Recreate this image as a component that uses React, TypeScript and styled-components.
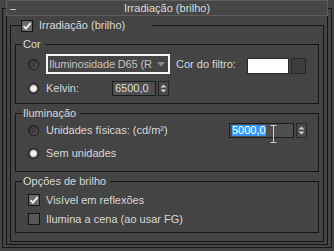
import styled, { createGlobalStyle } from "styled-components"

const GlobalStyle = createGlobalStyle`
    html, body {
        margin: 0;
        background: #444444;
    }
    body {
        font-family: "Liberation Sans", Arial, sans-serif;
        font-size: 11px;
        color: #d8d8d8;
    }
`

function CheckMark() {
    return (
        <svg width="10" height="10" viewBox="0 0 10 10">
            <path
                d="M1.6 5.2 L4 7.6 L8.6 2.2"
                fill="none"
                stroke="#f2f2f2"
                strokeWidth="1.9"
            />
        </svg>
    )
}

function Checkbox({ checked }: { checked?: boolean }) {
    return <Box $checked={checked}>{checked && <CheckMark />}</Box>
}

function Spinner({
    width,
    value,
    selected,
}: {
    width: number
    value: string
    selected?: boolean
}) {
    return (
        <SpinWrap>
            <SpinField $w={width}>
                {selected ? <Selection>{value}</Selection> : value}
            </SpinField>
            <SpinButtons>
                <svg width="7" height="4" viewBox="0 0 7 4">
                    <path d="M0.5 3.5 L3.5 0.5 L6.5 3.5 Z" fill="#cfcfcf" />
                </svg>
                <svg width="7" height="4" viewBox="0 0 7 4">
                    <path d="M0.5 0.5 L3.5 3.5 L6.5 0.5 Z" fill="#cfcfcf" />
                </svg>
            </SpinButtons>
            {selected && (
                <Cursor width="7" height="18" viewBox="0 0 7 18">
                    <path
                        d="M0.5 0.5 H6.5 M3.5 0.5 V17.5 M0.5 17.5 H6.5"
                        fill="none"
                        stroke="#cfcfcf"
                        strokeWidth="1"
                    />
                </Cursor>
            )}
        </SpinWrap>
    )
}

function App() {
    return (
        <>
            <GlobalStyle />
            <Rollout>
                <TitleBar>
                    <TitleInner>
                        <Collapse>–</Collapse>
                        <TitleText>Irradiação (brilho)</TitleText>
                        <span />
                    </TitleInner>
                </TitleBar>
                <Body>
                    <Group>
                        <GroupLegend>
                            <Checkbox checked />
                            <span>Irradiação (brilho)</span>
                        </GroupLegend>

                        <SubGroup $first $pt={3} $pb={7} $gap={7}>
                            <Caption>Cor</Caption>
                            <Row $h={20}>
                                <Radio />
                                <Select>
                                    <SelectText>Iluminosidade D65 (R</SelectText>
                                    <svg width="8" height="5" viewBox="0 0 8 5">
                                        <path d="M0 0 H8 L4 4.5 Z" fill="#8c8c8c" />
                                    </svg>
                                </Select>
                                <Label $w={71} $gap={6}>Cor do filtro:</Label>
                                <Swatch />
                                <SwatchButton />
                            </Row>
                            <Row $h={15}>
                                <Radio $on />
                                <Label $w={66}>Kelvin:</Label>
                                <Spinner width={44} value="6500,0" />
                            </Row>
                        </SubGroup>

                        <SubGroup $pt={3} $pb={10} $gap={8}>
                            <Caption>Iluminação</Caption>
                            <Row $h={15}>
                                <Radio />
                                <Label $w={183}>Unidades físicas: (cd/m²)</Label>
                                <Spinner width={65} value="5000,0" selected />
                            </Row>
                            <Row $h={15}>
                                <Radio $on />
                                <Label>Sem unidades</Label>
                            </Row>
                        </SubGroup>

                        <SubGroup $pt={5} $pb={6} $gap={5}>
                            <Caption>Opções de brilho</Caption>
                            <Row $h={14}>
                                <Checkbox checked />
                                <Label $gap={6}>Visível em reflexões</Label>
                            </Row>
                            <Row $h={14}>
                                <Checkbox />
                                <Label $gap={6}>Ilumina a cena (ao usar FG)</Label>
                            </Row>
                        </SubGroup>
                    </Group>
                </Body>
            </Rollout>
        </>
    )
}

export default App

const Rollout = styled.fieldset`
    margin: 0 2px;
    padding: 0 3px 2px;
    min-width: 0;
    border: 1px solid #161616;
`

const TitleBar = styled.legend`
    box-sizing: border-box;
    width: 100%;
    height: 16px;
    margin: 0;
    padding: 0;
    border: 1px solid #5d5d5d;
    background: #474747;
`

const TitleInner = styled.div`
    display: grid;
    grid-template-columns: 20px 1fr 20px;
    align-items: center;
    height: 14px;
    line-height: 14px;
    color: #dcdcdc;
`

const Collapse = styled.span`
    padding-left: 3px;
`

const TitleText = styled.span`
    text-align: center;
`

const Body = styled.div`
    border: 1px solid #161616;
    border-top: none;
    padding: 3px 3px 2px;
`

const Group = styled.fieldset`
    margin: 0;
    padding: 0 4px 8px;
    min-width: 0;
    border: 1px solid #161616;
`

const GroupLegend = styled.legend`
    box-sizing: border-box;
    width: 131px;
    height: 13px;
    margin-left: 6px;
    padding: 0;
    display: flex;
    align-items: center;
    gap: 6px;
    line-height: 13px;
`

const SubGroup = styled.fieldset<{
    $first?: boolean
    $pt: number
    $pb: number
    $gap: number
}>`
    margin: ${({ $first }) => ($first ? "6px" : "3px")} 0 0;
    padding: ${({ $pt }) => $pt}px 0 ${({ $pb }) => $pb}px;
    min-width: 0;
    border: 1px solid #161616;
    display: flex;
    flex-direction: column;
    gap: ${({ $gap }) => $gap}px;
`

const Caption = styled.legend`
    margin-left: 6px;
    padding: 0 4px 0 1px;
    height: 13px;
    line-height: 13px;
`

const Row = styled.div<{ $h: number }>`
    display: flex;
    align-items: center;
    height: ${({ $h }) => $h}px;
    padding-left: 12px;
`

const Label = styled.span<{ $w?: number; $gap?: number }>`
    flex: none;
    margin-left: ${({ $gap }) => $gap ?? 7}px;
    width: ${({ $w }) => ($w ? `${$w}px` : "auto")};
    white-space: nowrap;
    line-height: 13px;
`

const Box = styled.span<{ $checked?: boolean }>`
    box-sizing: border-box;
    flex: none;
    width: 12px;
    height: 12px;
    border: 1px solid #151515;
    background: ${({ $checked }) => ($checked ? "#6a6a6a" : "#575757")};
    display: flex;
    align-items: center;
    justify-content: center;
`

const Radio = styled.span<{ $on?: boolean }>`
    box-sizing: border-box;
    flex: none;
    width: 11px;
    height: 11px;
    border-radius: 50%;
    border: 1px solid #141414;
    background: ${({ $on }) =>
        $on
            ? "radial-gradient(circle, #f2f2f2 0 2.6px, #9a9a9a 3.4px, #555555 4.5px)"
            : "#3e3e3e"};
    box-shadow: ${({ $on }) =>
        $on ? "none" : "inset -1px -1px 0 #5c5c5c"};
`

const Select = styled.div`
    box-sizing: border-box;
    flex: none;
    width: 124px;
    height: 20px;
    margin-left: 7px;
    padding: 0 3px 0 1px;
    border: 2px solid #f4f4f4;
    background: #454545;
    display: flex;
    align-items: center;
    justify-content: space-between;
    color: #c2c2c2;
`

const SelectText = styled.span`
    flex: none;
    white-space: nowrap;
    line-height: 13px;
    letter-spacing: -0.15px;
`

const Swatch = styled.div`
    box-sizing: border-box;
    flex: none;
    align-self: flex-end;
    width: 42px;
    height: 16px;
    border: 1px solid #2a2a2a;
    background: #ffffff;
`

const SwatchButton = styled.div`
    box-sizing: border-box;
    flex: none;
    align-self: flex-end;
    width: 15px;
    height: 16px;
    margin-left: 2px;
    border: 1px solid #272727;
    background: #3c3c3c;
`

const SpinWrap = styled.div`
    position: relative;
    display: flex;
    align-items: center;
    gap: 2px;
`

const SpinField = styled.div<{ $w: number }>`
    box-sizing: border-box;
    width: ${({ $w }) => $w}px;
    height: 15px;
    padding: 0 0 0 2px;
    border: 1px solid #1c1c1c;
    background: #4f4f4f;
    line-height: 13px;
    color: #dcdcdc;
`

const Selection = styled.span`
    display: inline-block;
    height: 11px;
    line-height: 11px;
    margin-top: 1px;
    background: #3399ff;
    color: #ffffff;
`

const SpinButtons = styled.div`
    box-sizing: border-box;
    width: 11px;
    height: 15px;
    border: 1px solid #272727;
    background: #4a4a4a;
    display: flex;
    flex-direction: column;
    align-items: center;
    justify-content: space-evenly;
`

const Cursor = styled.svg`
    position: absolute;
    left: 41px;
    top: 2px;
`
